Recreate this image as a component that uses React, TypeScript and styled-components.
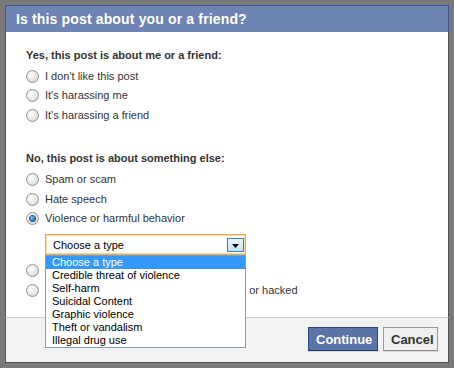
import React from 'react';
import styled, { createGlobalStyle } from 'styled-components';

const GlobalStyle = createGlobalStyle`
    html, body {
        margin: 0;
        padding: 0;
        background: #7a7a7a;
    }
    body {
        font-family: 'Liberation Sans', Arial, sans-serif;
        font-size: 11px;
        color: #333;
    }
`;

const aboutMe = ["I don't like this post", "It's harassing me", "It's harassing a friend"];
const types = [
    'Choose a type',
    'Credible threat of violence',
    'Self-harm',
    'Suicidal Content',
    'Graphic violence',
    'Theft or vandalism',
    'Illegal drug use',
];

const Radio = ({ checked, label }: { checked?: boolean; label: string }) => (
    <Row>
        <Circle $checked={checked} />
        <Label>{label}</Label>
    </Row>
);

const App = () => {
    return (
        <Page>
            <GlobalStyle />
            <Dialog>
                <Header>Is this post about you or a friend?</Header>
                <Content>
                    <SectionTitle>Yes, this post is about me or a friend:</SectionTitle>
                    <List $top={4.5}>
                        {aboutMe.map((t) => (
                            <Radio key={t} label={t} />
                        ))}
                    </List>
                    <SectionTitle $gap>No, this post is about something else:</SectionTitle>
                    <List $top={5}>
                        <Radio label="Spam or scam" />
                        <Radio label="Hate speech" />
                        <Radio checked label="Violence or harmful behavior" />
                    </List>
                    <SelectWrap>
                        <SelectBox>
                            <span>Choose a type</span>
                            <ArrowButton>
                                <svg width="7" height="4" viewBox="0 0 7 4">
                                    <path d="M0 0h7L3.5 4z" fill="#000" />
                                </svg>
                            </ArrowButton>
                        </SelectBox>
                        <Options>
                            {types.map((t, i) => (
                                <Option key={t} $active={i === 0}>
                                    {t}
                                </Option>
                            ))}
                        </Options>
                    </SelectWrap>
                    <List>
                        <Radio label="Sexually explicit content" />
                        <Radio label="I think this account is being compromised or hacked" />
                    </List>
                </Content>
                <Footer>
                    <Button $primary>Continue</Button>
                    <Button>Cancel</Button>
                </Footer>
            </Dialog>
        </Page>
    );
};

export default App;

const Page = styled.div`
    padding: 5px;
    width: 454px;
    height: 368px;
    box-sizing: border-box;
`;
const Dialog = styled.div`
    width: 444px;
    height: 358px;
    display: flex;
    flex-direction: column;
    background: #fff;
    box-sizing: border-box;
`;
const Header = styled.div`
    height: 27px;
    box-sizing: border-box;
    background: #6d84b4;
    border: 1px solid #3b5998;
    border-bottom: none;
    color: #fff;
    font-size: 14px;
    font-weight: bold;
    letter-spacing: 0.15px;
    line-height: 26px;
    padding-left: 10px;
`;
const Content = styled.div`
    flex: 1;
    border-left: 1px solid #555;
    border-right: 1px solid #555;
    padding: 16px 20px 0;
`;
const SectionTitle = styled.div<{ $gap?: boolean }>`
    font-weight: bold;
    line-height: 14px;
    color: #333;
    margin-top: ${(p) => (p.$gap ? '26px' : '0')};
`;
const List = styled.div<{ $top?: number }>`
    display: flex;
    flex-direction: column;
    margin-top: ${(p) => p.$top ?? 0}px;
`;
const Row = styled.div`
    display: flex;
    align-items: center;
    height: 19.5px;
    gap: 6px;
    white-space: nowrap;
`;
const Circle = styled.span<{ $checked?: boolean }>`
    width: 13px;
    height: 13px;
    box-sizing: border-box;
    border-radius: 50%;
    border: 1px solid #8e8f8f;
    background: radial-gradient(circle at 35% 35%, #fff 0%, #e6e6e6 55%, #cfcfcf 100%);
    display: flex;
    align-items: center;
    justify-content: center;
    flex: none;
    &::after {
        content: '';
        display: ${(p) => (p.$checked ? 'block' : 'none')};
        width: 5px;
        height: 5px;
        border-radius: 50%;
        background: radial-gradient(circle at 40% 40%, #8fd0f5 0%, #1a6fae 60%, #0d3e6e 100%);
        box-shadow: 0 0 0 1px #2a5b86;
    }
`;
const Label = styled.span`
    color: #333;
    line-height: 13px;
`;
const SelectWrap = styled.div`
    position: relative;
    margin: 5.5px 0 6px 19px;
    width: 201px;
`;
const SelectBox = styled.div`
    height: 21px;
    box-sizing: border-box;
    border: 1px solid #e2b05a;
    box-shadow: inset 0 0 0 1px #f6d9a4;
    background: #fff;
    display: flex;
    align-items: center;
    justify-content: space-between;
    padding: 0 1px 0 7px;
    color: #000;
`;
const ArrowButton = styled.span`
    width: 17px;
    height: 14px;
    box-sizing: border-box;
    border: 1px solid #3c7fb1;
    background: linear-gradient(#eaf6fd, #bfe3f7);
    display: flex;
    align-items: center;
    justify-content: center;
    padding-top: 2px;
`;
const Options = styled.div`
    position: absolute;
    left: 0;
    top: 21px;
    width: 201px;
    box-sizing: border-box;
    border: 1px solid #7f9db9;
    background: #fff;
    z-index: 2;
`;
const Option = styled.div<{ $active?: boolean }>`
    height: 13px;
    line-height: 13px;
    padding-left: 6px;
    color: ${(p) => (p.$active ? '#fff' : '#000')};
    background: ${(p) => (p.$active ? '#3399ff' : 'transparent')};
`;
const Footer = styled.div`
    height: 46px;
    box-sizing: border-box;
    background: #f2f2f2;
    border: 1px solid #555;
    border-top: 1px solid #ccc;
    display: flex;
    justify-content: flex-end;
    align-items: center;
    gap: 5px;
    padding: 0 10px 2px 0;
`;
const Button = styled.button<{ $primary?: boolean }>`
    height: 24px;
    box-sizing: border-box;
    font-family: 'Liberation Sans', Arial, sans-serif;
    font-size: 13px;
    font-weight: bold;
    padding: 0 7px;
    border: 1px solid ${(p) => (p.$primary ? '#29447e' : '#999')};
    border-bottom-color: ${(p) => (p.$primary ? '#1a356e' : '#888')};
    background: ${(p) => (p.$primary ? '#5b74a8' : '#eee')};
    color: ${(p) => (p.$primary ? '#fff' : '#333')};
    box-shadow: 0 1px 0 rgba(0, 0, 0, 0.1);
    width: ${(p) => (p.$primary ? '70px' : '55px')};
`;
